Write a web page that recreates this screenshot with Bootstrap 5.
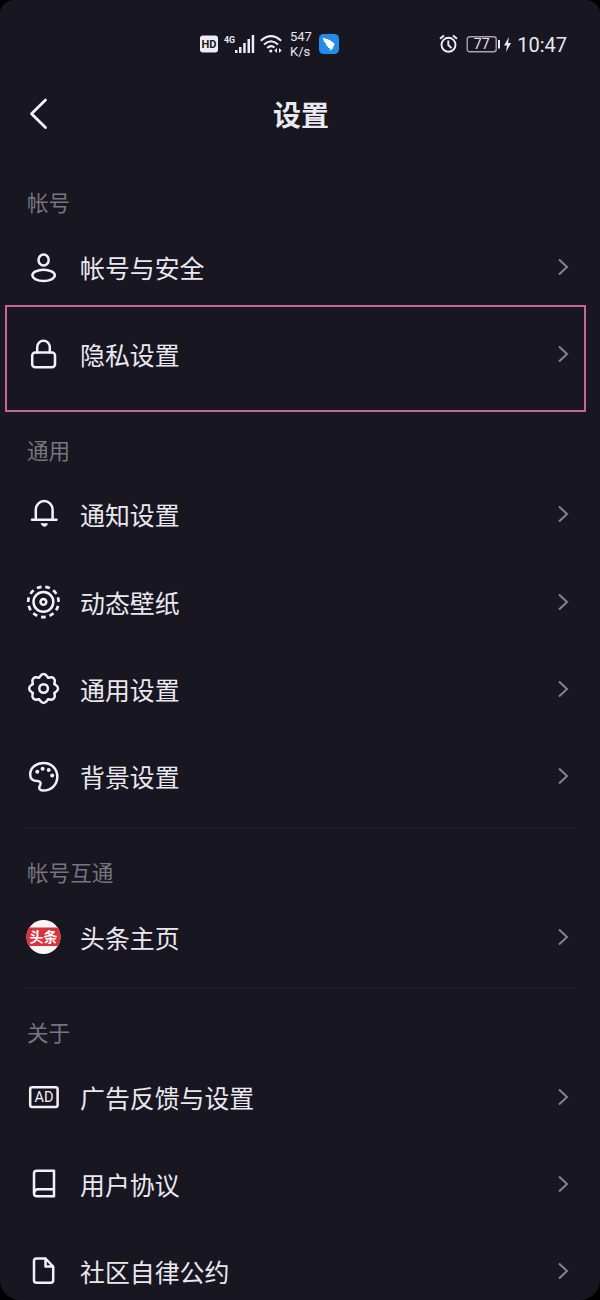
<!DOCTYPE html>
<html lang="zh-CN">
<head>
<meta charset="utf-8">
<meta name="viewport" content="width=device-width, initial-scale=1">
<title>设置</title>
<link href="https://cdn.jsdelivr.net/npm/bootstrap@5.3.0/dist/css/bootstrap.min.css" rel="stylesheet">
<style>
body{background:#000;color:#eae9f0;font-family:Roboto,"Noto Sans CJK SC",sans-serif}
svg{display:block;flex:none;overflow:visible}
.screen{width:600px;height:1300px;background:#181620;border-radius:14px 14px 20px 20px;overflow:hidden}
.status{height:76px;padding:12px 33px 0 200px;color:#e9e8ef}
.speed{font-size:13px;line-height:15px;width:22px}
.clock{font-size:20px;line-height:24px;padding-top:1px}
.titlebar{height:76px;padding:0 29px}
.titlebar h1{font-size:28px;line-height:40px;width:56px;padding-top:5px;margin-right:-2px!important}
.side{width:20px}
.group-label{height:41px;line-height:41px;font-size:21.6px;color:#77757f;padding-left:27px}
.gap-block{height:32px}
.gap-block.lined::before{content:"";display:block;margin:0 24px;border-top:2px solid #1d1c26;transform:translateY(6px)}
.item{height:87.32px;padding:0 31px 0 26px;color:inherit}
.item .text{font-size:24.9px;line-height:36px;margin-left:18px;padding-top:4px}
.ico{width:36px;height:36px;fill:none;stroke:#f2f1f7;stroke-width:2.5;stroke-linecap:round;stroke-linejoin:round}
.chev{width:12px;height:18px;fill:none;stroke:#85838d;stroke-width:2;margin-top:-2px}
.highlight{left:5px;right:14px;top:-6.500px;height:107px;border:2px solid #c96497}
</style>
</head>
<body>
<main class="screen">
  <div class="status d-flex align-items-center">
    <svg width="18" height="18"><rect y=".5" width="18" height="17" rx="3" fill="#eeedf4"/><text x="9" y="13" text-anchor="middle" font-size="11" font-weight="700" fill="#181620">HD</text></svg>
    <svg class="ms-2" width="29" height="20" fill="#eeedf4"><text x="-2" y="8.500" font-size="9.500" font-weight="700" textLength="11" lengthAdjust="spacingAndGlyphs">4G</text><path d="M9 16h2.500v3H9zM13 13h2.500v6H13zM17.200 9h2.500v10h-2.500zM21.500 5h2.500v14h-2.500zM25.700 1h2.500v18h-2.500z"/></svg>
    <svg style="margin-left:5px" width="24" height="20" fill="none" stroke="#eeedf4" stroke-width="2"><path d="M.8 6.800Q11 -2.500 21.200 6.800M4 10.500Q11 4 18 10.500M7.200 14Q11 10.500 14.500 13.500"/><circle cx="10.800" cy="17" r="1.600" fill="#eeedf4" stroke="none"/><path d="M17 14v5l-2.700-2.500zM19 14v5l2.700-2.500z" fill="#eeedf4" stroke="none"/></svg>
    <div class="speed" style="margin-left:6px"><div>547</div><div>K/s</div></div>
    <svg style="margin-left:7px" width="20" height="20"><rect width="20" height="20" rx="4.500" fill="#238be9"/><path d="M3.500 3.500Q10 5 15.200 9.200Q16 10 15.200 11.200L13.500 13.400H15L10.500 17L11.300 14.200L8.500 13.700L9.500 12.800L6.200 11L7.800 10.600Q4.500 8 3.500 3.500Z" fill="#fff"/></svg>
    <div class="ms-auto d-flex align-items-center">
      <svg width="19" height="20" fill="none" stroke="#eeedf4" stroke-width="1.900"><circle cx="9.500" cy="10.800" r="7"/><path d="M9.300 6.500v4.500l3.200 3.200M1 4.700L5 1.400M14 1.400L18 4.700"/></svg>
      <svg style="margin-left:8px" width="35" height="18"><rect x="1.200" y="1.700" width="29" height="15" rx="2.500" fill="none" stroke="#a6a4ae" stroke-width="1.400"/><rect x="32" y="5" width="2" height="8.500" fill="#eeedf4"/><text x="15.700" y="14.200" font-size="14" text-anchor="middle" fill="#e6e5ec">77</text></svg>
      <svg style="margin:0 6px 0 3px" width="7" height="15"><path d="M5 0L0 8.500H3L2 15L7 6H4Z" fill="#eeedf4"/></svg>
      <span class="clock">10:47</span>
    </div>
  </div>

  <header class="titlebar d-flex align-items-center justify-content-between">
    <svg class="side" width="20" height="32" fill="none" stroke="#f4f3f9" stroke-width="2.800" stroke-linecap="round" stroke-linejoin="round"><path d="M16.500 2L2.500 15.800L16.500 29.500"/></svg>
    <h1 class="m-0 fw-bold">设置</h1>
    <span class="side"></span>
  </header>

  <section style="padding-top:31px">
    <div class="group-label">帐号</div>
    <div class="item d-flex align-items-center">
      <svg class="ico"><ellipse cx="17.600" cy="10" rx="5.100" ry="5.600"/><ellipse cx="17.600" cy="25.300" rx="11.200" ry="5.600"/></svg>
      <span class="text">帐号与安全</span><svg class="chev ms-auto"><path d="M2 1.500L10 9L2 16.500"/></svg>
    </div>
    <div class="item d-flex align-items-center position-relative">
      <svg class="ico"><rect x="6.200" y="15.500" width="22.800" height="14.800" rx="3"/><path d="M11.200 15.500V10a6.300 6.300 0 0 1 12.600 0V15.500"/></svg>
      <span class="text">隐私设置</span><svg class="chev ms-auto"><path d="M2 1.500L10 9L2 16.500"/></svg>
      <div class="highlight position-absolute"></div>
    </div>
  </section>

  <section>
    <div class="gap-block"></div>
    <div class="group-label">通用</div>
    <div class="item d-flex align-items-center">
      <svg class="ico"><path d="M6 22.700H30.500M9.800 22.200V12.500a8.400 8.400 0 0 1 16.800 0V22.200"/><path d="M15.400 26.800H21.400Q20.700 29.300 18.400 29.300T15.400 26.800Z" fill="#f2f1f7" stroke-width="1"/></svg>
      <span class="text">通知设置</span><svg class="chev ms-auto"><path d="M2 1.500L10 9L2 16.500"/></svg>
    </div>
    <div class="item d-flex align-items-center">
      <svg class="ico"><g transform="translate(17.400 16.900)"><circle r="15.200" pathLength="121" stroke-dasharray="6 5" stroke-dashoffset="3" stroke-linecap="butt" transform="rotate(90)" stroke-width="2.700"/><circle r="9.900"/><circle r="2.900"/></g></svg>
      <span class="text">动态壁纸</span><svg class="chev ms-auto"><path d="M2 1.500L10 9L2 16.500"/></svg>
    </div>
    <div class="item d-flex align-items-center">
      <svg class="ico"><defs><path id="lobe" d="M10.900 -4.515C11.700 -3.200 14.400 -3.300 14.400 0S11.700 3.200 10.900 4.515"/></defs><g transform="translate(17.600 16.500)"><use href="#lobe"/><use href="#lobe" transform="rotate(45)"/><use href="#lobe" transform="rotate(90)"/><use href="#lobe" transform="rotate(135)"/><use href="#lobe" transform="rotate(180)"/><use href="#lobe" transform="rotate(225)"/><use href="#lobe" transform="rotate(270)"/><use href="#lobe" transform="rotate(315)"/><circle r="4.300"/></g></svg>
      <span class="text">通用设置</span><svg class="chev ms-auto"><path d="M2 1.500L10 9L2 16.500"/></svg>
    </div>
    <div class="item d-flex align-items-center">
      <svg class="ico"><path d="M4.200 15.500C4.200 8.500 10.500 3.900 17.800 3.900C25.500 3.900 31.300 10 31.300 17.800C31.300 25.500 25.500 31.500 17 31.500C13.500 31.500 12.600 29.300 13.700 27.200C15.200 24.300 15 22.200 11.500 22.100C7 22.100 4.200 20 4.200 15.500Z"/><g fill="#f2f1f7" stroke="none"><circle cx="11.300" cy="12.800" r="2"/><circle cx="16.600" cy="9.700" r="2"/><circle cx="22.700" cy="11" r="2"/><circle cx="26.200" cy="16.500" r="2"/></g></svg>
      <span class="text">背景设置</span><svg class="chev ms-auto"><path d="M2 1.500L10 9L2 16.500"/></svg>
    </div>
  </section>

  <section>
    <div class="gap-block lined"></div>
    <div class="group-label">帐号互通</div>
    <div class="item d-flex align-items-center">
      <svg class="ico" style="stroke:none"><defs><clipPath id="disc"><circle cx="17.500" cy="17" r="17"/></clipPath></defs><g clip-path="url(#disc)"><rect width="36" height="36" fill="#fbf7f9"/><rect y="7.500" width="36" height="18.500" fill="#dc333b"/></g><text x="17.500" y="22" text-anchor="middle" font-size="14" font-weight="700" fill="#fff">头条</text></svg>
      <span class="text">头条主页</span><svg class="chev ms-auto"><path d="M2 1.500L10 9L2 16.500"/></svg>
    </div>
  </section>

  <section>
    <div class="gap-block lined"></div>
    <div class="group-label">关于</div>
    <div class="item d-flex align-items-center">
      <svg class="ico"><rect x="4.200" y="7.300" width="27.400" height="19.700" rx="2"/><text x="18" y="22.300" text-anchor="middle" font-size="14.500" fill="#f2f1f7" stroke="none">AD</text></svg>
      <span class="text">广告反馈与设置</span><svg class="chev ms-auto"><path d="M2 1.500L10 9L2 16.500"/></svg>
    </div>
    <div class="item d-flex align-items-center">
      <svg class="ico"><path d="M28 29.300H11Q8 29.300 8 26.200V6.500Q8 3.800 10.800 3.800H28V29.300ZM8.200 25.500Q8.800 22.300 12 22.300H28"/></svg>
      <span class="text">用户协议</span><svg class="chev ms-auto"><path d="M2 1.500L10 9L2 16.500"/></svg>
    </div>
    <div class="item d-flex align-items-center">
      <svg class="ico"><path d="M19.500 4.500H10.500Q8 4.500 8 7V26.300Q8 28.800 10.500 28.800H24.700Q27.200 28.800 27.200 26.300V12.500L19.500 4.500V12.500H27.200"/></svg>
      <span class="text">社区自律公约</span><svg class="chev ms-auto"><path d="M2 1.500L10 9L2 16.500"/></svg>
    </div>
  </section>
</main>
<script src="https://cdn.jsdelivr.net/npm/bootstrap@5.3.0/dist/js/bootstrap.bundle.min.js"></script>
</body>
</html>
